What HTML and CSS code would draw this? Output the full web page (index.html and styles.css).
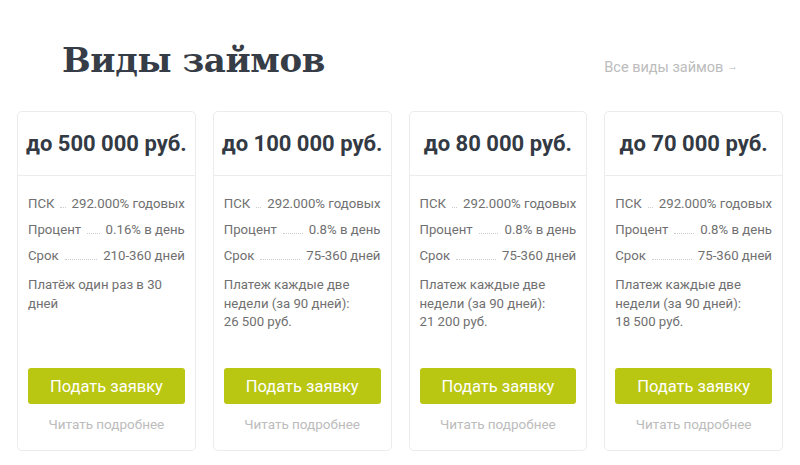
FILE: index.html
```html
<!DOCTYPE html>
<html lang="ru">
<head>
    <meta charset="UTF-8">
    <title>Виды займов</title>
    <link rel="stylesheet" href="styles.css">
</head>
<body>
    <div class="section">
        <div class="section-head">
            <h1>Виды займов</h1>
            <a class="all-link" href="#">Все виды займов <small>→</small></a>
        </div>

        <div class="cards">
            <div class="card">
                <div class="card-title">до 500 000 руб.</div>
                <div class="card-body">
                    <div class="row"><span>ПСК</span><i></i><span>292.000% годовых</span></div>
                    <div class="row"><span>Процент</span><i></i><span>0.16% в день</span></div>
                    <div class="row"><span>Срок</span><i></i><span>210-360 дней</span></div>
                    <p class="note">Платёж один раз в 30 дней</p>
                </div>
                <div class="card-foot">
                    <button class="btn">Подать заявку</button>
                    <a class="more" href="#">Читать подробнее</a>
                </div>
            </div>
            <div class="card">
                <div class="card-title">до 100 000 руб.</div>
                <div class="card-body">
                    <div class="row"><span>ПСК</span><i></i><span>292.000% годовых</span></div>
                    <div class="row"><span>Процент</span><i></i><span>0.8% в день</span></div>
                    <div class="row"><span>Срок</span><i></i><span>75-360 дней</span></div>
                    <p class="note">Платеж каждые две недели (за 90 дней):<br>26 500 руб.</p>
                </div>
                <div class="card-foot">
                    <button class="btn">Подать заявку</button>
                    <a class="more" href="#">Читать подробнее</a>
                </div>
            </div>
            <div class="card">
                <div class="card-title">до 80 000 руб.</div>
                <div class="card-body">
                    <div class="row"><span>ПСК</span><i></i><span>292.000% годовых</span></div>
                    <div class="row"><span>Процент</span><i></i><span>0.8% в день</span></div>
                    <div class="row"><span>Срок</span><i></i><span>75-360 дней</span></div>
                    <p class="note">Платеж каждые две недели (за 90 дней):<br>21 200 руб.</p>
                </div>
                <div class="card-foot">
                    <button class="btn">Подать заявку</button>
                    <a class="more" href="#">Читать подробнее</a>
                </div>
            </div>
            <div class="card">
                <div class="card-title">до 70 000 руб.</div>
                <div class="card-body">
                    <div class="row"><span>ПСК</span><i></i><span>292.000% годовых</span></div>
                    <div class="row"><span>Процент</span><i></i><span>0.8% в день</span></div>
                    <div class="row"><span>Срок</span><i></i><span>75-360 дней</span></div>
                    <p class="note">Платеж каждые две недели (за 90 дней):<br>18 500 руб.</p>
                </div>
                <div class="card-foot">
                    <button class="btn">Подать заявку</button>
                    <a class="more" href="#">Читать подробнее</a>
                </div>
            </div>
        </div>
    </div>
</body>
</html>
```

FILE: styles.css
```css
body {
    margin: 0;
    font-family: Roboto, 'Liberation Sans', sans-serif;
    background: #fff;
    color: #333;
}
.section {
    padding: 30px 17px 14px;
}
.section-head {
    display: flex;
    justify-content: space-between;
    align-items: center;
    padding: 0 45px;
    height: 60px;
    margin-bottom: 21px;
}
h1 {
    margin: 0;
    font-family: 'DejaVu Serif', serif;
    font-size: 34px;
    font-weight: bold;
    color: #363d47;
    letter-spacing: -0.4px;
}
.all-link {
    font-size: 14.5px;
    color: #bcbcbc;
    text-decoration: none;
    margin-top: 14px;
}
.all-link small {
    font-size: 11px;
    vertical-align: 2px;
}
.cards {
    display: grid;
    grid-template-columns: repeat(4, 1fr);
    gap: 17px;
}
.card {
    border: 1px solid #ececec;
    border-radius: 5px;
    display: flex;
    flex-direction: column;
    height: 338px;
}
.card-title {
    height: 63px;
    display: flex;
    align-items: center;
    justify-content: center;
    border-bottom: 1px solid #ececec;
    font-size: 22px;
    font-weight: bold;
    color: #333a44;
}
.card-body {
    padding: 20px 10px 0;
    font-size: 13.2px;
    color: #707070;
    flex-grow: 1;
}
.row {
    display: flex;
    align-items: baseline;
    height: 26px;
}
.row i {
    flex-grow: 1;
    border-bottom: 1px dotted #ccc;
    margin: 0 6px;
}
.note {
    margin: 2px 0 0;
    line-height: 18.5px;
}
.card-foot {
    padding: 0 10px 18px;
    display: flex;
    flex-direction: column;
    align-items: center;
}
.btn {
    width: 100%;
    height: 36px;
    border: none;
    border-radius: 3px;
    background: #b9c612;
    color: #fff;
    font-family: Roboto, sans-serif;
    font-size: 16.5px;
    cursor: pointer;
}
.more {
    margin-top: 12px;
    font-size: 13.5px;
    color: #bcbcbc;
    text-decoration: none;
}
```
